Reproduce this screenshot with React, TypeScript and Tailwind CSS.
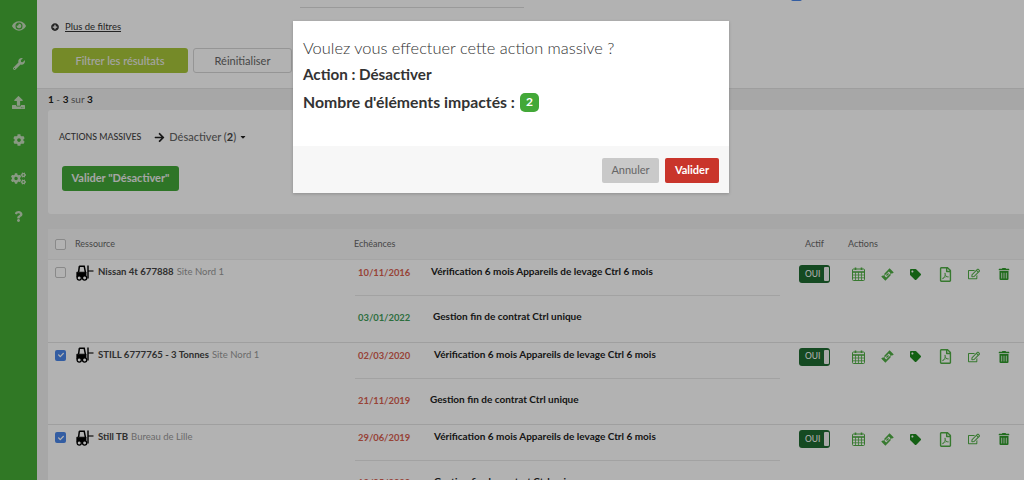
import React from 'react';
import {
  FaArrowRight,
  FaCaretDown,
  FaCheck,
  FaCog,
  FaCogs,
  FaEye,
  FaPlusCircle,
  FaQuestion,
  FaRegEdit,
  FaRegFilePdf,
  FaTag,
  FaTrashAlt,
  FaUpload,
  FaWrench,
} from 'react-icons/fa';

type Task = { date: string; late: boolean; label: string; gap: string };
type Resource = { name: string; site: string; checked: boolean; tasks: Task[] };

const VERIF = 'Vérification 6 mois Appareils de levage Ctrl 6 mois';
const FIN = 'Gestion fin de contrat Ctrl unique';

const resources: Resource[] = [
  {
    name: 'Nissan 4t 677888',
    site: 'Site Nord 1',
    checked: false,
    tasks: [
      { date: '10/11/2016', late: true, label: VERIF, gap: 'pl-[73px]' },
      { date: '03/01/2022', late: false, label: FIN, gap: 'pl-[75px]' },
    ],
  },
  {
    name: 'STILL 6777765 - 3 Tonnes',
    site: 'Site Nord 1',
    checked: true,
    tasks: [
      { date: '02/03/2020', late: true, label: VERIF, gap: 'pl-[76px]' },
      { date: '21/11/2019', late: true, label: FIN, gap: 'pl-[72px]' },
    ],
  },
  {
    name: 'Still TB',
    site: 'Bureau de Lille',
    checked: true,
    tasks: [
      { date: '29/06/2019', late: true, label: VERIF, gap: 'pl-[76px]' },
      { date: '12/05/2020', late: true, label: FIN, gap: 'pl-[76px]' },
    ],
  },
];

const Forklift = () => (
  <svg width="18" height="16" viewBox="0 0 18 16" className="shrink-0 text-black" fill="none" stroke="currentColor">
    <path d="M3.2 1.2h5l1.4 7" strokeWidth="1.5" />
    <path d="M3.4 1.2 2.6 7" strokeWidth="1.5" />
    <path d="M0.8 7.2h9.2v5h-9.2z" fill="currentColor" strokeWidth="0.8" />
    <path d="M12 0.5v13" strokeWidth="1.4" />
    <path d="M12 6h5.5" strokeWidth="1.1" />
    <circle cx="3.2" cy="13" r="2.1" fill="#fff" strokeWidth="1.3" />
    <circle cx="8.6" cy="13" r="2.1" fill="#fff" strokeWidth="1.3" />
  </svg>
);

const CalendarIcon = () => (
  <svg width="13" height="14" viewBox="0 0 13 14" fill="none" stroke="currentColor" strokeWidth="1">
    <rect x="0.5" y="2" width="12" height="11.5" rx="1" />
    <path d="M0.5 5h12" strokeWidth="1.6" />
    <path d="M0.5 8h12M0.5 10.8h12M3.5 5v8.5M6.5 5v8.5M9.5 5v8.5" strokeWidth="0.8" />
    <path d="M3.5 0.5v2.6M9.5 0.5v2.6" strokeWidth="1.6" />
  </svg>
);

const TicketIcon = () => (
  <svg width="13" height="13" viewBox="0 0 13 13" fill="currentColor">
    <path d="M8.6 0.2 12.8 4.4 11.2 5.6C10.7 5.3 10.1 5.4 9.8 5.8 9.4 6.2 9.4 6.8 9.7 7.2L4.4 12.8 0.2 8.6 1.8 7.4C2.2 7.7 2.8 7.6 3.2 7.2 3.6 6.8 3.6 6.2 3.3 5.8Z" />
    <path d="M7.8 3.4 9.6 5.2 5.2 9.6 3.4 7.8Z" fill="#fff" />
    <path d="M7.1 5 8 5.9 5.9 8 5 7.1Z" />
  </svg>
);

const Checkbox = ({ checked }: { checked: boolean }) =>
  checked ? (
    <span className="flex h-[11px] w-[11px] items-center justify-center rounded-[2px] bg-[#4a86e8] text-white">
      <FaCheck size={6} />
    </span>
  ) : (
    <span className="block h-[11px] w-[11px] rounded-[2px] border border-[#c4c4c4] bg-white" />
  );

const Toggle = () => (
  <div className="flex h-[18px] w-[31px] items-center rounded-[3px] bg-[#1f6a31] pl-[6px] pr-[1px] text-[8.5px] text-white">
    <span className="flex-1">OUI</span>
    <span className="h-[14px] w-[5px] rounded-[1px] bg-[#f2f2f2]" />
  </div>
);

const RowActions = () => (
  <div className="flex items-center pl-[22px] text-[#4fae44]">
    <span className="flex w-[29px]"><CalendarIcon /></span>
    <span className="flex w-[29px]"><TicketIcon /></span>
    <span className="flex w-[28px]"><FaTag size={11} className="text-[#1d8a1d]" /></span>
    <span className="flex w-[30px]"><FaRegFilePdf size={15} /></span>
    <span className="flex w-[30px]"><FaRegEdit size={12} /></span>
    <span className="flex"><FaTrashAlt size={12} className="text-[#2f9a2a]" /></span>
  </div>
);

const ResourceRow = ({ item }: { item: Resource }) => (
  <div className="h-[82.5px] shrink-0 border-b border-[#e4e4e4] bg-white">
    <div className="flex h-full">
      <div className="flex h-[25px] w-[307px] shrink-0 items-center pl-[7px]">
        <Checkbox checked={item.checked} />
        <span className="ml-[10px] mr-[4px]"><Forklift /></span>
        <span className="text-[9.6px] font-bold text-[#444]">{item.name}</span>
        <span className="ml-[3px] text-[9.5px] text-[#999]">{item.site}</span>
      </div>
      <div className="w-[425px] shrink-0">
        {item.tasks.map((task) => (
          <div key={task.label} className="flex items-start first:h-[36px] first:border-b first:border-[#e8e8e8] first:pt-[4px] last:h-[46px] last:pt-[13px]">
            <span className={`ml-[3px] w-0 whitespace-nowrap pt-[2px] text-[9.4px] font-bold ${task.late ? 'text-[#d9604f]' : 'text-[#3f9e5a]'}`}>
              {task.date}
            </span>
            <span className={`whitespace-nowrap text-[10px] font-bold text-[#222] ${task.gap}`}>{task.label}</span>
          </div>
        ))}
      </div>
      <div className="flex h-[28px] items-center pl-[19px]">
        <Toggle />
      </div>
      <div className="flex h-[28px] items-center">
        <RowActions />
      </div>
    </div>
  </div>
);

export default function App() {
  return (
    <div className="relative flex h-[480px] w-[1024px] overflow-hidden bg-[#f0f0f0] font-['Lato','Liberation_Sans',sans-serif]">
      <aside className="flex w-[37px] shrink-0 flex-col items-center bg-[#45ad36] pt-[7px] text-[#c4dcbc]">
        <span className="flex h-[38px] items-center"><FaEye size={14} /></span>
        <span className="flex h-[38px] items-center"><FaWrench size={12} /></span>
        <span className="flex h-[38px] items-center"><FaUpload size={13} /></span>
        <span className="flex h-[38px] items-center"><FaCog size={12} /></span>
        <span className="flex h-[38px] items-center"><FaCogs size={15} /></span>
        <span className="flex h-[38px] items-center"><FaQuestion size={11} /></span>
      </aside>

      <main className="flex min-w-0 flex-1 flex-col">
        <section className="h-[89px] shrink-0 border-b border-[#e2e2e2] bg-white">
          <div className="flex h-[8px] items-end">
            <div className="ml-[263px] w-[224px] border-b border-[#ddd]" />
            <div className="ml-[267px] flex -translate-y-[5px] items-center">
              <Checkbox checked />
              <span className="ml-[5px] -translate-y-[8px] text-[9.5px] text-[#555]">Inclure les sous-services</span>
            </div>
          </div>
          <div className="flex items-center pl-[14px] pt-[12px] text-[9.5px] text-[#333]">
            <FaPlusCircle size={8} />
            <span className="ml-[6px] underline">Plus de filtres</span>
          </div>
          <div className="mt-[14px] flex pl-[15px]">
            <button className="h-[25px] w-[136px] rounded-[3px] bg-[#a8c63a] text-[11px] font-medium text-[#ececec]">Filtrer les résultats</button>
            <button className="ml-[5px] h-[25px] w-[99px] rounded-[3px] border border-[#d6d6d6] bg-white text-[11px] text-[#666]">Réinitialiser</button>
          </div>
        </section>

        <div className="flex-1 pl-[11px]">
          <div className="flex h-[21px] items-center text-[10px] text-[#666]">
            <b className="text-[#222]">1</b>&nbsp;-&nbsp;<b className="text-[#222]">3</b>&nbsp;sur&nbsp;<b className="text-[#222]">3</b>
          </div>

          <section className="h-[104px] rounded-l-[3px] bg-white pl-[11px]">
            <div className="flex h-[54px] items-center text-[8.8px] font-medium text-[#444]">
              <span>ACTIONS MASSIVES</span>
              <FaArrowRight size={11} className="ml-[13px] text-[#222]" />
              <span className="ml-[4px] text-[11px] text-[#666]">
                Désactiver (<b className="text-[#444]">2</b>)
              </span>
              <FaCaretDown size={8} className="ml-[3px] text-[#222]" />
            </div>
            <button className="ml-[3px] mt-[-2px] h-[25px] w-[117px] rounded-[3px] bg-[#43a838] text-[11px] font-bold text-[#eee]">Valider "Désactiver"</button>
          </section>

          <section className="mt-[15px] flex flex-col">
            <div className="flex h-[31px] shrink-0 items-center border-b border-[#ececec] bg-[#f7f7f7] pl-[7px] text-[9px] text-[#666]">
              <Checkbox checked={false} />
              <span className="ml-[9px] w-[279px]">Ressource</span>
              <span className="w-[451px]">Echéances</span>
              <span className="w-[43px]">Actif</span>
              <span>Actions</span>
            </div>
            {resources.map((item) => (
              <ResourceRow key={item.name} item={item} />
            ))}
          </section>
        </div>
      </main>

      {/* voile + fenêtre de confirmation */}
      <div className="absolute inset-0 bg-black/30" />
      <div className="absolute left-[293px] top-[21px] flex h-[172px] w-[436px] flex-col bg-white shadow-[0_1px_3px_rgba(0,0,0,0.2)]">
        <div className="h-[125px] pl-[10px] pt-[17px] text-[#333]">
          <p className="text-[16.4px] font-light leading-[20px] text-[#333]">Voulez vous effectuer cette action massive ?</p>
          <p className="mt-[6px] text-[15.2px] font-bold leading-[20px]">Action : Désactiver</p>
          <p className="mt-[8px] flex items-center text-[15.8px] font-bold leading-[20px]">
            Nombre d'éléments impactés :
            <span className="ml-[5px] flex h-[19px] w-[19px] items-center justify-center rounded-[5px] bg-[#43a838] text-[12px] text-white">2</span>
          </p>
        </div>
        <div className="flex flex-1 items-center justify-end gap-[6px] bg-[#f7f7f7] pr-[10px] pt-[1px]">
          <button className="h-[25px] w-[57px] rounded-[2px] bg-[#c9c9c9] text-[11px] text-[#666]">Annuler</button>
          <button className="h-[25px] w-[54px] rounded-[2px] bg-[#c9352b] text-[11px] font-bold text-white">Valider</button>
        </div>
      </div>
    </div>
  );
}
